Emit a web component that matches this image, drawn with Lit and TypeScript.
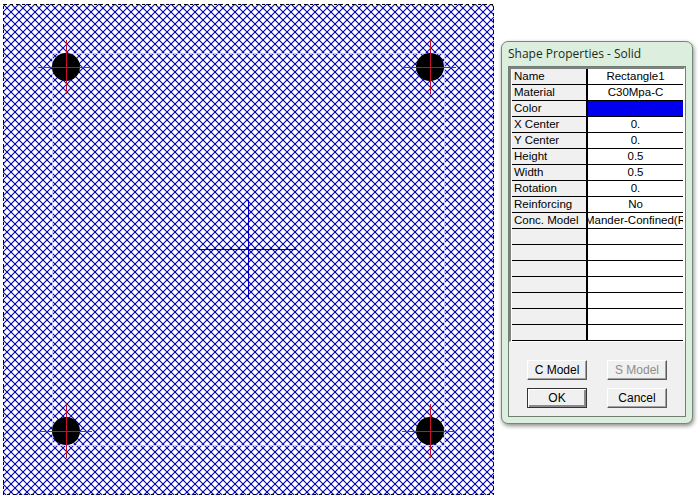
import { LitElement, html, css, svg } from "lit";
import { customElement } from "lit/decorators.js";

const ROWS: [string, string][] = [
  ["Name", "Rectangle1"],
  ["Material", "C30Mpa-C"],
  ["Color", ""],
  ["X Center", "0."],
  ["Y Center", "0."],
  ["Height", "0.5"],
  ["Width", "0.5"],
  ["Rotation", "0."],
  ["Reinforcing", "No"],
  ["Conc. Model", "Mander-Confined(R"],
  ["", ""],
  ["", ""],
  ["", ""],
  ["", ""],
  ["", ""],
  ["", ""],
  ["", ""],
];

const BARS: [number, number][] = [
  [66, 67],
  [430, 67],
  [66, 431],
  [430, 431],
];

@customElement("app-root")
export class AppRoot extends LitElement {
  static styles = css`
    :host {
      display: block;
      width: 699px;
      height: 500px;
      background: #fff;
      overflow: hidden;
      font-family: "Liberation Sans", Arial, sans-serif;
    }
    .page {
      display: flex;
      align-items: flex-start;
      width: 699px;
      height: 500px;
      padding: 4px 0 0 3px;
      box-sizing: border-box;
    }
    .canvas {
      display: block;
      flex: none;
      width: 491px;
      height: 491px;
      shape-rendering: crispEdges;
    }
    .dialog {
      flex: none;
      box-sizing: border-box;
      width: 192px;
      height: 383px;
      margin: 37px 0 0 7px;
      border: 1px solid #6f8a76;
      border-radius: 7px;
      background: #dcefdf;
      box-shadow: 1px 2px 4px rgba(0, 0, 0, 0.45);
      padding: 0 6px 6px;
      display: flex;
      flex-direction: column;
    }
    .title {
      flex: none;
      height: 24px;
      line-height: 24px;
      font-family: "Open Sans", sans-serif;
      font-size: 12px;
      color: #1c2a20;
      white-space: nowrap;
    }
    .client {
      flex: 1;
      background: #f0f0f0;
      border: 1px solid #707f74;
      display: flex;
      flex-direction: column;
    }
    .grid {
      flex: none;
      height: 275px;
      overflow: hidden;
      margin: 0;
      border-left: 2px solid #808080;
      border-top: 2px solid #808080;
      border-right: 1px solid #fff;
      border-bottom: 1px solid #fff;
      padding-left: 1px;
      display: grid;
      grid-template-columns: 76px 95px;
      grid-auto-rows: 16px;
      align-content: start;
      background: #fff;
      font-size: 11.5px;
      color: #000;
      box-sizing: border-box;
    }
    .head,
    .val {
      box-sizing: border-box;
      height: 16px;
      line-height: 15px;
      border-bottom: 1px solid #000;
      white-space: nowrap;
      overflow: hidden;
    }
    .head {
      background: #f0f0f0;
      padding-left: 2px;
      border-right: 2px solid #000;
    }
    .val {
      background: #fff;
      text-align: center;
      display: flex;
      justify-content: center;
    }
    .swatch {
      background: #0000ee;
    }
    .buttons {
      display: grid;
      grid-template-columns: 60px 60px;
      grid-auto-rows: 20px;
      column-gap: 20px;
      row-gap: 8px;
      justify-content: center;
      margin-top: 18px;
    }
    .btn {
      box-sizing: border-box;
      border: 1px solid;
      border-color: #fff #5a5a5a #5a5a5a #fff;
      box-shadow: inset -1px -1px 0 #a0a0a0, 0 0 0 0 #000;
      background: #f0f0f0;
      font: 12px "Liberation Sans", Arial, sans-serif;
      color: #000;
      padding: 0;
      display: flex;
      align-items: center;
      justify-content: center;
    }
    .btn.off {
      color: #8d8d8d;
    }
    .btn.def {
      border-color: #333;
      box-shadow: inset 1px 1px 0 #fff, inset -2px -2px 0 #8a8a8a;
    }
  `;

  private bar(x: number, y: number) {
    return svg`
      <circle cx=${x} cy=${y} r="14" fill="#000" shape-rendering="auto" />
      <path d="M${x - 28} ${y}H${x + 26}M${x} ${y - 27}V${y + 27}" stroke="#c8102e" stroke-width="1" fill="none" />
    `;
  }

  render() {
    return html`
      <div class="page">
        <svg class="canvas" viewBox="3 4 491 491" width="491" height="491" role="img" aria-label="Section drawing">
          <defs>
            <pattern id="hatch" x="3" y="4" width="8" height="8" patternUnits="userSpaceOnUse">
              <path d="M0 0L8 8M8 0L0 8" stroke="#0000c0" stroke-width="1.1" shape-rendering="auto" fill="none" />
              <rect x="3.5" y="3.5" width="1.4" height="1.4" fill="#000080" />
              <rect x="0" y="0" width="1" height="1" fill="#000080" />
            </pattern>
          </defs>
          <rect x="3" y="4" width="491" height="491" fill="url(#hatch)" />
          <rect x="3.5" y="4.5" width="490" height="490" fill="none" stroke="#000" stroke-dasharray="3 3" stroke-width="1" />
          <rect x="52.5" y="53.5" width="392" height="392" fill="none" stroke="#c8c8ff" stroke-width="1" />
          <path d="M199 249.5H297M248.5 200V299" stroke="#0000c8" stroke-width="1" fill="none" />
          ${BARS.map(([x, y]) => this.bar(x, y))}
        </svg>
        <div class="dialog">
          <div class="title">Shape Properties - Solid</div>
          <div class="client">
            <div class="grid">
              ${ROWS.map(
                ([k, v]) => html`
                  <div class="head">${k}</div>
                  <div class="val ${k === "Color" ? "swatch" : ""}">${v}</div>
                `
              )}
            </div>
            <div class="buttons">
              <button class="btn">C Model</button>
              <button class="btn off">S Model</button>
              <button class="btn def">OK</button>
              <button class="btn">Cancel</button>
            </div>
          </div>
        </div>
      </div>
    `;
  }
}
